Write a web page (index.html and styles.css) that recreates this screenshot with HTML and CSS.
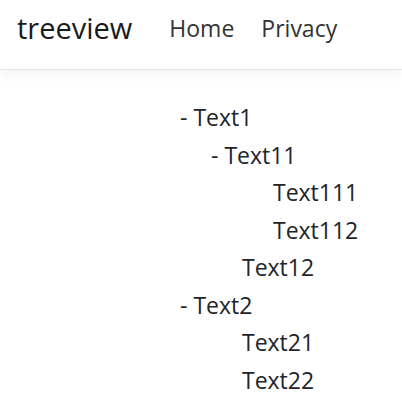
FILE: index.html
```html
<!DOCTYPE html>
<html>
<head>
<meta charset="utf-8">
<link rel="stylesheet" href="styles.css">
</head>
<body>
<header class="navbar">
  <a class="brand" href="#">treeview</a>
  <nav class="nav">
    <a class="nav-link" href="#">Home</a>
    <a class="nav-link" href="#">Privacy</a>
  </nav>
</header>
<main class="main">
  <ul class="tree">
    <li><span class="row">- Text1</span>
      <ul>
        <li><span class="row">- Text11</span>
          <ul>
            <li class="leaf"><span class="row">Text111</span></li>
            <li class="leaf"><span class="row">Text112</span></li>
          </ul>
        </li>
        <li class="leaf"><span class="row">Text12</span></li>
      </ul>
    </li>
    <li><span class="row">- Text2</span>
      <ul>
        <li class="leaf"><span class="row">Text21</span></li>
        <li class="leaf"><span class="row">Text22</span></li>
      </ul>
    </li>
  </ul>
</main>
</body>
</html>
```
FILE: styles.css
```css
html, body {
  margin: 0;
  padding: 0;
  background: #fff;
  font-family: "Open Sans", "Noto Sans", sans-serif;
  color: #212529;
}
.navbar {
  height: 69px;
  display: flex;
  align-items: center;
  border-bottom: 1px solid #e6e6e6;
  box-shadow: 0 4px 12px rgba(0, 0, 0, 0.05);
}
.brand {
  margin-left: 17px;
  font-size: 29px;
  color: #1a1a1a;
  text-decoration: none;
  line-height: 1;
  margin-top: -14px;
}
.nav {
  display: flex;
  margin-left: 37px;
  gap: 27px;
  margin-top: -13px;
}
.nav-link {
  font-size: 23px;
  color: #333;
  text-decoration: none;
  line-height: 1;
}
.main {
  padding-top: 29px;
}
.tree {
  list-style: none;
  margin: 0 0 0 180px;
  padding: 0;
}
.tree ul {
  list-style: none;
  margin: 0;
  padding: 0 0 0 31px;
}
.tree .leaf {
  padding-left: 31px;
}
.row {
  display: block;
  font-size: 23px;
  line-height: 37.5px;
  white-space: nowrap;
}
```
